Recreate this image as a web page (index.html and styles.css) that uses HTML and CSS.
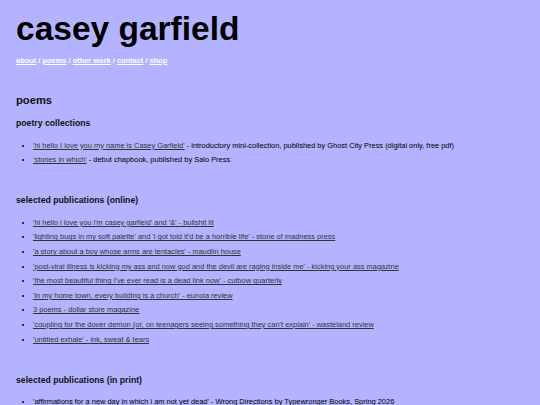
FILE: index.html
```html
<!DOCTYPE html>
<html lang="en">
<head>
<meta charset="utf-8">
<title>casey garfield</title>
<link rel="stylesheet" href="styles.css">
</head>
<body>
<header class="masthead">
  <h1 class="site-title">casey garfield</h1>
  <nav class="site-nav"><a href="#">about</a> / <a href="#">poems</a> / <a href="#">other work</a> / <a href="#">contact</a> / <a href="#">shop</a></nav>
</header>
<main class="content">
  <h2 class="page-title">poems</h2>
  <section class="group">
    <h3 class="group-title">poetry collections</h3>
    <ul class="pubs">
      <li><a href="#">'hi hello I love you my name is Casey Garfield'</a> - introductory mini-collection, published by Ghost City Press (digital only, free pdf)</li>
      <li><a href="#">'stories in which'</a> - debut chapbook, published by Salo Press</li>
    </ul>
  </section>
  <section class="group">
    <h3 class="group-title">selected publications (online)</h3>
    <ul class="pubs">
      <li><a href="#">'hi hello i love you i'm casey garfield' and '&amp;' - bullshit lit</a></li>
      <li><a href="#">'lighting bugs in my soft palette' and 'i got told it'd be a horrible life' - stone of madness press</a></li>
      <li><a href="#">'a story about a boy whose arms are tentacles' - maudlin house</a></li>
      <li><a href="#">'post-viral illness is kicking my ass and now god and the devil are raging inside me' - kicking your ass magazine</a></li>
      <li><a href="#">'the most beautiful thing I've ever read is a dead link now' - cutbow quarterly</a></li>
      <li><a href="#">'in my home town, every building is a church' - eunoia review</a></li>
      <li><a href="#">3 poems - dollar store magazine</a></li>
      <li><a href="#">'coupling for the dover demon (or, on teenagers seeing something they can't explain' - wasteland review</a></li>
      <li><a href="#">'untitled exhale' - ink, sweat &amp; tears</a></li>
    </ul>
  </section>
  <section class="group">
    <h3 class="group-title">selected publications (in print)</h3>
    <ul class="pubs">
      <li>'affirmations for a new day in which i am not yet dead' - Wrong Directions by Typewronger Books, Spring 2026</li>
    </ul>
  </section>
</main>
</body>
</html>
```
FILE: styles.css
```css
html, body {
  margin: 0;
  padding: 0;
}
body {
  background: #b3b3ff;
  color: #000;
  font-family: "Liberation Sans", Arial, sans-serif;
  font-size: 7.45px;
  padding: 0 16px;
}
.masthead {
  display: block;
}
.site-title {
  font-size: 33.5px;
  line-height: 38px;
  font-weight: bold;
  margin: 10px 0 0;
  color: #000;
}
.site-nav {
  display: block;
  margin-top: 8px;
  font-size: 7.45px;
  line-height: 9px;
  font-weight: bold;
  color: #fff;
}
.site-nav a {
  color: #fff;
  text-decoration: underline;
}
.page-title {
  font-size: 11.2px;
  line-height: 13px;
  font-weight: bold;
  margin: 28.6px 0 0;
  color: #111;
}
.group {
  margin-top: 27.5px;
}
.page-title + .group {
  margin-top: 11.4px;
}
.group-title {
  font-size: 8.7px;
  line-height: 10px;
  font-weight: bold;
  margin: 0;
  color: #111;
}
.pubs {
  margin: 10.6px 0 0;
  padding-left: 17px;
  list-style: disc;
}
.pubs li {
  line-height: 14.6px;
}
.pubs a {
  color: #333;
  text-decoration: underline;
}
```
